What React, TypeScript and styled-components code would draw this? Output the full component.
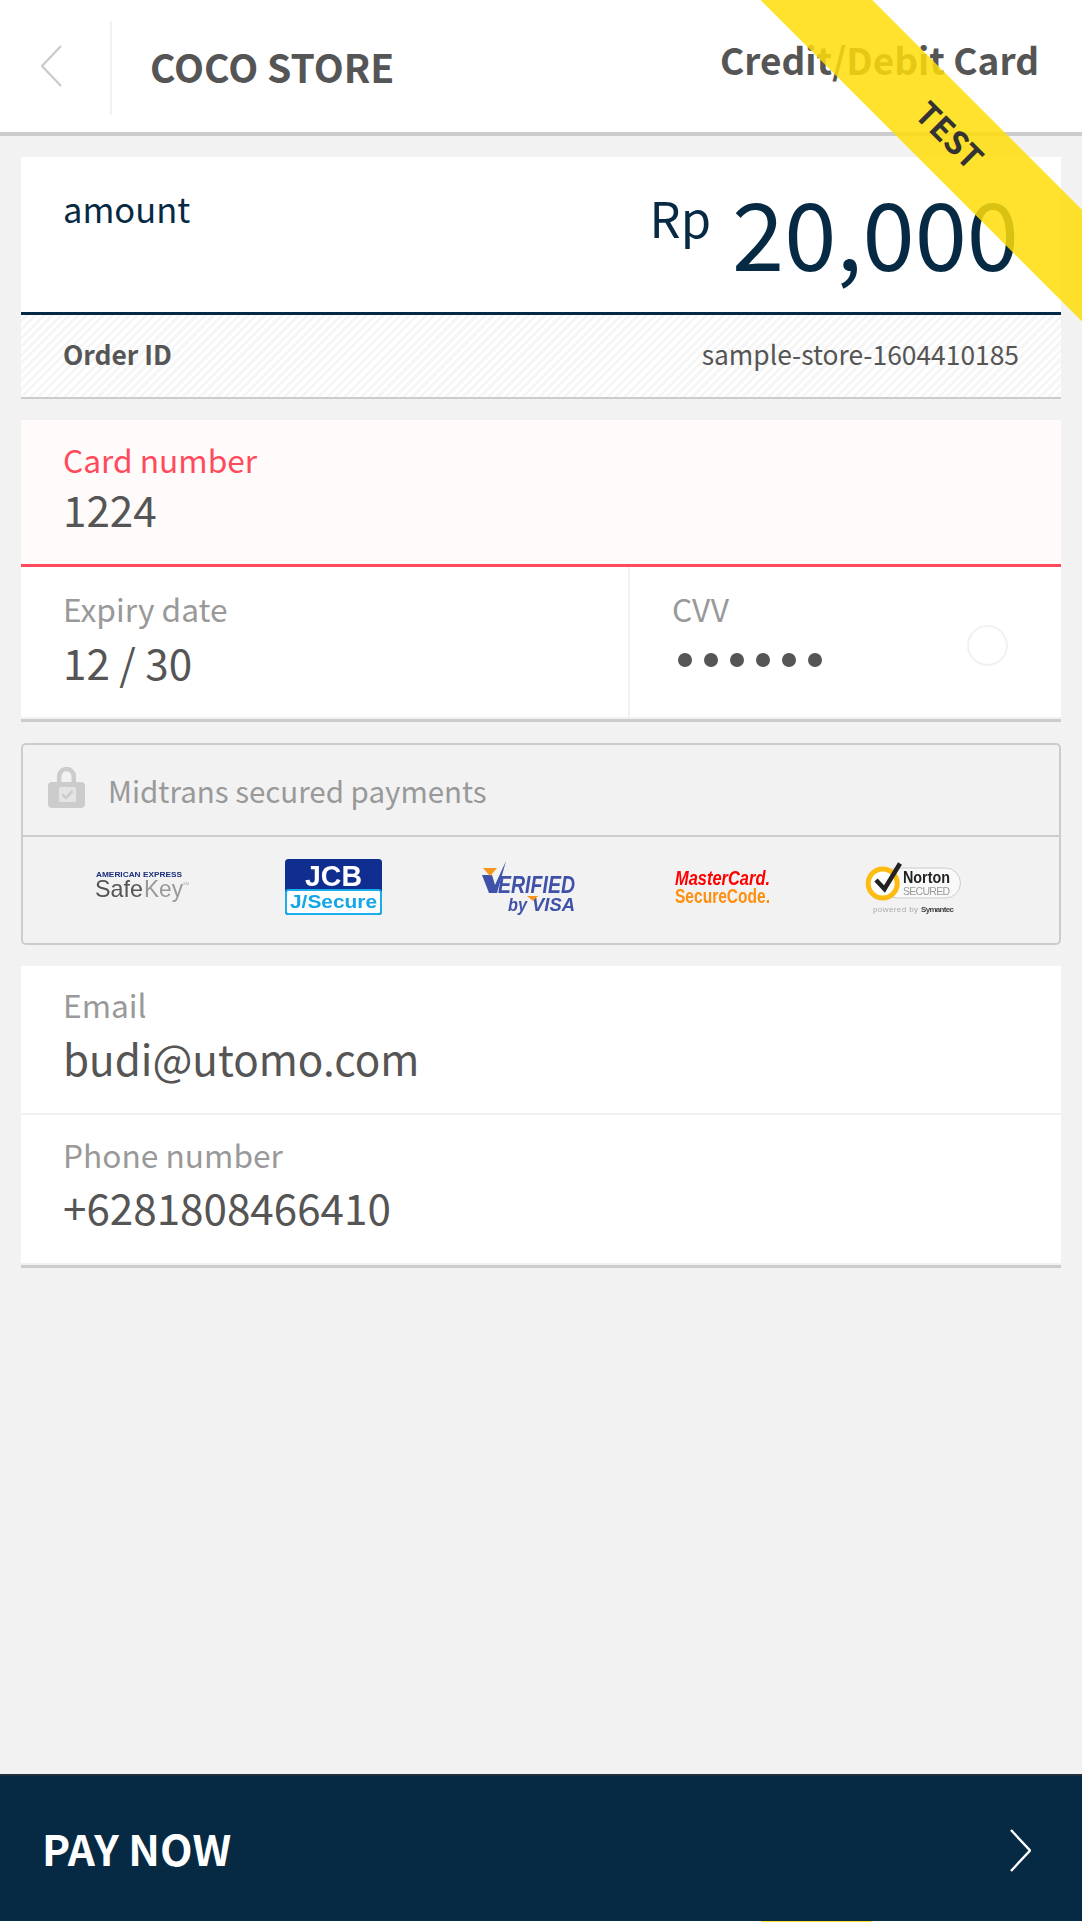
import React from "react";
import styled, { createGlobalStyle } from "styled-components";

const FONT = `"Noto Sans CJK SC", "Source Sans Pro", "Noto Sans", sans-serif`;
const LOGO_FONT = "Liberation Sans, Arial, sans-serif";
const NAVY = "#062a44";

const Global = createGlobalStyle`
  html, body { margin: 0; padding: 0; background: #fff; }
  * { box-sizing: border-box; }
`;

const Page = styled.div`
  position: relative;
  width: 1082px;
  height: 1922px;
  overflow: hidden;
  background: #fff;
  font-family: ${FONT};
`;

const Screen = styled.div`
  display: flex;
  flex-direction: column;
  height: 1921px;
  background: #f2f2f2;
`;

const Header = styled.header`
  display: flex;
  align-items: center;
  flex: none;
  height: 136px;
  background: #fff;
  border-bottom: 4px solid #ccc;
`;

const BackCell = styled.div`
  display: flex;
  align-items: flex-start;
  flex: none;
  width: 112px;
  height: 94px;
  margin-top: 4px;
  padding: 24px 0 0 41px;
  border-right: 2px solid #f1f1f1;
`;

const StoreName = styled.h1`
  flex: 1;
  margin: 0 0 0 38px;
  font-size: 39px;
  line-height: 50px;
  font-weight: 700;
  color: #555;
`;

const Method = styled.div`
  margin: -14px 43px 0 0;
  font-size: 37px;
  line-height: 50px;
  font-weight: 700;
  color: #555;
`;

const Content = styled.main`
  display: flex;
  flex: 1;
  flex-direction: column;
  gap: 21px;
  padding: 21px 21px 0;
`;

const AmountCard = styled.section`
  display: flex;
  flex-direction: column;
  border-bottom: 2px solid #ccc;
`;

const AmountRow = styled.div`
  display: flex;
  justify-content: space-between;
  height: 158px;
  padding: 29px 42px 0;
  background: #fff;
  border-bottom: 3px solid ${NAVY};
  color: ${NAVY};
`;

const AmountLabel = styled.div`
  font-size: 34.5px;
  line-height: 44px;
`;

const AmountValue = styled.div`
  display: flex;
  align-items: flex-start;
  gap: 21px;
  margin-top: -16px;
`;

const Currency = styled.span`
  margin-top: 17px;
  font-size: 49px;
  line-height: 60px;
`;

const Figure = styled.span`
  font-size: 94px;
  line-height: 120px;
`;

const OrderRow = styled.div`
  display: flex;
  align-items: center;
  justify-content: space-between;
  height: 82px;
  padding: 0 42px 6px;
  color: #555;
  background: repeating-linear-gradient(135deg, #fff 0 3px, #f6f6f6 3px 6px);
`;

const OrderLabel = styled.span`
  font-size: 26.4px;
  font-weight: 700;
`;

const OrderValue = styled.span`
  font-size: 26.4px;
`;

const FieldCard = styled.section`
  display: flex;
  flex-direction: column;
  background: #fff;
  border-bottom: 3px solid #ccc;
`;

const Field = styled.div<{ $error?: boolean; $height: number; $pad: number; $divider?: boolean }>`
  height: ${(p) => p.$height}px;
  padding: ${(p) => p.$pad}px 42px 0;
  background: ${(p) => (p.$error ? "#fffbfa" : "#fff")};
  border-bottom: ${(p) =>
    p.$error ? "3px solid #ff4a5c" : p.$divider ? "2px solid #f1f1f1" : "none"};
`;

const Label = styled.div<{ $error?: boolean }>`
  font-size: 31.7px;
  line-height: 40px;
  color: ${(p) => (p.$error ? "#ff4a5c" : "#999")};
`;

const Value = styled.div<{ $gap: number }>`
  margin-top: ${(p) => p.$gap}px;
  font-size: 42.2px;
  line-height: 54px;
  color: #555;
`;

const SplitRow = styled.div`
  display: grid;
  grid-template-columns: 609px 1fr;
  height: 152px;
  border-bottom: 2px solid #f1f1f1;
`;

const ExpiryCell = styled.div`
  padding: 21px 42px 0;
  border-right: 2px solid #f1f1f1;
`;

const CvvCell = styled.div`
  position: relative;
  padding: 21px 0 0 42px;
`;

const Dots = styled.div`
  display: flex;
  gap: 12px;
  margin: 25px 0 0 6px;
`;

const Dot = styled.span`
  width: 14px;
  height: 14px;
  border-radius: 50%;
  background: #555;
`;

const CvvHint = styled.span`
  position: absolute;
  top: 58px;
  right: 53px;
  width: 41px;
  height: 41px;
  border: 2px solid #f1f1f1;
  border-radius: 50%;
`;

const SecureBox = styled.section`
  display: flex;
  flex-direction: column;
  height: 202px;
  border: 2px solid #ccc;
  border-radius: 5px;
`;

const SecureHead = styled.div`
  display: flex;
  align-items: center;
  flex: none;
  gap: 23px;
  height: 92px;
  padding-left: 25px;
  border-bottom: 2px solid #ccc;
`;

const LockIcon = styled.span`
  display: flex;
  margin-top: -5px;
`;

const SecureText = styled.span`
  font-size: 29.5px;
  color: #999;
`;

const LogoRow = styled.div`
  display: grid;
  flex: 1;
  grid-template-columns: 193px 189px 199px 191px 191px;
  align-items: center;
  justify-items: center;
  padding: 0 0 6px 23px;
`;

const Footer = styled.footer`
  display: flex;
  align-items: center;
  justify-content: space-between;
  flex: none;
  height: 147px;
  padding: 0 51px 0 42px;
  background: ${NAVY};
  border-top: 2px solid #20303c;
`;

const PayText = styled.span`
  margin-top: -3px;
  font-size: 42.3px;
  font-weight: 700;
  color: #fff;
`;

const NextIcon = styled.span`
  display: flex;
  margin-top: 4px;
`;

const Ribbon = styled.div`
  position: absolute;
  top: 94px;
  left: 700px;
  display: flex;
  align-items: center;
  justify-content: center;
  width: 500px;
  height: 78.5px;
  padding-left: 2px;
  background: rgba(255, 221, 9, 0.85);
  transform: rotate(45deg);
`;

const RibbonText = styled.span`
  font-size: 32px;
  line-height: 40px;
  font-weight: 700;
  color: #333;
`;

const RibbonWrap = styled.div`
  position: absolute;
  left: 761px;
  bottom: 0;
  width: 111px;
  height: 1px;
  background: #ffe22e;
`;

const LogoSvg = styled.svg`
  display: block;
  overflow: visible;
  filter: blur(0.4px);
`;

const Chevron = ({ dir, color, w, h }: { dir: "l" | "r"; color: string; w: number; h: number }) => (
  <svg width={w} height={h} viewBox={`0 0 ${w} ${h}`} fill="none">
    <path
      d={dir === "l" ? `M${w - 1} 1 L1 ${h / 2} L${w - 1} ${h - 1}` : `M1 1 L${w - 1} ${h / 2} L1 ${h - 1}`}
      stroke={color}
      strokeWidth="2.4"
    />
  </svg>
);

const Lock = () => (
  <svg width="37" height="41" viewBox="0 0 37 41" fill="none">
    <path d="M11.2 18V9.3a7.3 7.3 0 0 1 14.6 0V18" stroke="#ccc" strokeWidth="4.5" />
    <rect x="0" y="15" width="37" height="26" rx="4" fill="#ccc" />
    <rect x="11" y="20" width="17" height="15" rx="1.5" fill="#e4e4e4" />
    <path d="M14.5 27.5l3.5 3.5 6.5-7" stroke="#ccc" strokeWidth="2.6" />
  </svg>
);

const SafeKey = () => (
  <LogoSvg width="95" height="30" viewBox="0 0 95 30">
    <text x="1" y="5" fontFamily={LOGO_FONT} fontSize="6.5" fontWeight="700" fill="#1b2f7c" textLength="86" lengthAdjust="spacingAndGlyphs">
      AMERICAN EXPRESS
    </text>
    <text x="0" y="24.7" fontFamily={LOGO_FONT} fontSize="24" fill="#555" textLength="48" lengthAdjust="spacingAndGlyphs">
      Safe
    </text>
    <text x="49" y="24.7" fontFamily={LOGO_FONT} fontSize="24" fill="#999" textLength="39" lengthAdjust="spacingAndGlyphs">
      Key
    </text>
    <text x="88" y="13" fontFamily={LOGO_FONT} fontSize="4" fill="#aaa">SM</text>
  </LogoSvg>
);

const Jcb = () => (
  <LogoSvg width="97" height="56" viewBox="0 0 97 56">
    <rect width="97" height="56" rx="3.5" fill="#0f2e8f" />
    <rect x="1" y="31" width="95" height="24" rx="2.5" fill="#fff" stroke="#1aaeea" strokeWidth="2" />
    <text x="48.5" y="26.7" textAnchor="middle" fontFamily={LOGO_FONT} fontSize="29" fontWeight="700" fill="#fff" textLength="57" lengthAdjust="spacingAndGlyphs">
      JCB
    </text>
    <text x="48.5" y="49" textAnchor="middle" fontFamily={LOGO_FONT} fontSize="18" fontWeight="700" fill="#14a6e6" textLength="87" lengthAdjust="spacingAndGlyphs">
      J/Secure
    </text>
  </LogoSvg>
);

const Visa = () => (
  <LogoSvg width="95" height="53" viewBox="0 0 95 53">
    <polygon points="2,14 12,14 15,24 26,0 17,32 9,32" fill="#3f51a8" />
    <polygon points="3,7 17,7 10,15" fill="#f7941d" />
    <text x="18" y="32" fontFamily={LOGO_FONT} fontSize="23.5" fontWeight="700" fontStyle="italic" fill="#3f51a8" textLength="77" lengthAdjust="spacingAndGlyphs">
      ERIFIED
    </text>
    <text x="28" y="50" fontFamily={LOGO_FONT} fontSize="18" fontWeight="700" fontStyle="italic" fill="#3f51a8" textLength="19" lengthAdjust="spacingAndGlyphs">
      by
    </text>
    <text x="52" y="50" fontFamily={LOGO_FONT} fontSize="18" fontWeight="700" fontStyle="italic" fill="#3f51a8" textLength="43" lengthAdjust="spacingAndGlyphs">
      VISA
    </text>
    <polygon points="47,35 58,35 53,40" fill="#f7941d" />
  </LogoSvg>
);

const MasterCard = () => (
  <LogoSvg width="95" height="35" viewBox="0 0 95 35">
    <text x="0" y="15" fontFamily={LOGO_FONT} fontSize="20" fontWeight="700" fontStyle="italic" fill="#f00" textLength="95" lengthAdjust="spacingAndGlyphs">
      MasterCard.
    </text>
    <text x="0" y="33" fontFamily={LOGO_FONT} fontSize="20" fontWeight="700" fill="#ff8f0f" textLength="95" lengthAdjust="spacingAndGlyphs">
      SecureCode.
    </text>
  </LogoSvg>
);

const Norton = () => (
  <LogoSvg width="95" height="51" viewBox="0 0 95 51">
    <rect x="16" y="6" width="78.5" height="30" rx="15" fill="#f9f9f9" stroke="#ccc" strokeWidth="1" />
    <circle cx="16.7" cy="21.5" r="14.5" fill="#fff" stroke="#fdbc11" strokeWidth="5" />
    <path d="M10 18l8.5 9L34 1.5" stroke="#222" strokeWidth="4.5" fill="none" />
    <text x="37" y="21" fontFamily={LOGO_FONT} fontSize="17" fontWeight="700" fill="#222" textLength="47" lengthAdjust="spacingAndGlyphs">
      Norton
    </text>
    <text x="37" y="33" fontFamily={LOGO_FONT} fontSize="10.5" fill="#999" textLength="47">
      SECURED
    </text>
    <text x="7" y="50" fontFamily={LOGO_FONT} fontSize="8" fill="#aaa" textLength="45">
      powered by
    </text>
    <text x="55" y="50" fontFamily={LOGO_FONT} fontSize="8" fontWeight="700" fill="#444" textLength="33">
      Symantec
    </text>
  </LogoSvg>
);

export default function App() {
  return (
    <Page>
      <Global />
      <Screen>
        <Header>
          <BackCell>
            <Chevron dir="l" color="#ccc" w={21} h={42} />
          </BackCell>
          <StoreName>COCO STORE</StoreName>
          <Method>Credit/Debit Card</Method>
        </Header>
        <Content>
          <AmountCard>
            <AmountRow>
              <AmountLabel>amount</AmountLabel>
              <AmountValue>
                <Currency>Rp</Currency>
                <Figure>20,000</Figure>
              </AmountValue>
            </AmountRow>
            <OrderRow>
              <OrderLabel>Order ID</OrderLabel>
              <OrderValue>sample-store-1604410185</OrderValue>
            </OrderRow>
          </AmountCard>
          <FieldCard>
            <Field $error $height={147} $pad={19}>
              <Label $error>Card number</Label>
              <Value $gap={3}>1224</Value>
            </Field>
            <SplitRow>
              <ExpiryCell>
                <Label>Expiry date</Label>
                <Value $gap={7}>12 / 30</Value>
              </ExpiryCell>
              <CvvCell>
                <Label>CVV</Label>
                <Dots>
                  {Array.from({ length: 6 }, (_, i) => (
                    <Dot key={i} />
                  ))}
                </Dots>
                <CvvHint />
              </CvvCell>
            </SplitRow>
          </FieldCard>
          <SecureBox>
            <SecureHead>
              <LockIcon>
                <Lock />
              </LockIcon>
              <SecureText>Midtrans secured payments</SecureText>
            </SecureHead>
            <LogoRow>
              <SafeKey />
              <Jcb />
              <Visa />
              <MasterCard />
              <Norton />
            </LogoRow>
          </SecureBox>
          <FieldCard>
            <Field $divider $height={149} $pad={18}>
              <Label>Email</Label>
              <Value $gap={7}>budi@utomo.com</Value>
            </Field>
            <Field $divider $height={150} $pad={19}>
              <Label>Phone number</Label>
              <Value $gap={6}>+6281808466410</Value>
            </Field>
          </FieldCard>
        </Content>
        <Footer>
          <PayText>PAY NOW</PayText>
          <NextIcon>
            <Chevron dir="r" color="#fff" w={21} h={43} />
          </NextIcon>
        </Footer>
      </Screen>
      <Ribbon>
        <RibbonText>TEST</RibbonText>
      </Ribbon>
      <RibbonWrap />
    </Page>
  );
}
